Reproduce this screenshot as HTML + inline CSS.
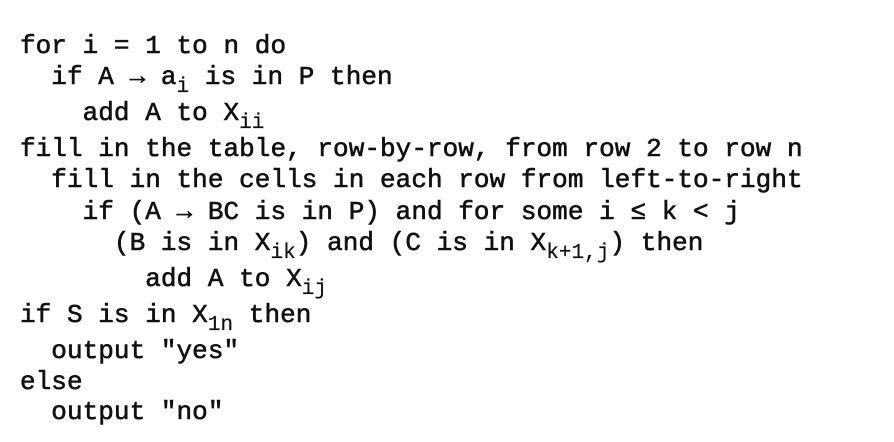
<!DOCTYPE html>
<html><head><meta charset="utf-8"><style>
html,body{margin:0;padding:0;background:#fff;width:894px;height:442px;overflow:hidden}
.l{position:absolute;left:20px;font-family:"Liberation Mono","DejaVu Sans Mono",monospace;font-size:26px;line-height:26px;font-weight:normal;-webkit-text-stroke:0.6px #111;color:#111;white-space:pre;letter-spacing:0.05px}
sub{font-size:21px;vertical-align:-8px;line-height:0;-webkit-text-stroke:0.2px #111}
</style></head><body>
<div class="l" style="top:33px">for i = 1 to n do</div>
<div class="l" style="top:64px">  if A → a<sub>i</sub> is in P then</div>
<div class="l" style="top:100px">    add A to X<sub>ii</sub></div>
<div class="l" style="top:136px">fill in the table, row-by-row, from row 2 to row n</div>
<div class="l" style="top:167px">  fill in the cells in each row from left-to-right</div>
<div class="l" style="top:199px">    if (A → BC is in P) and for some i ≤ k &lt; j</div>
<div class="l" style="top:230px">      (B is in X<sub>ik</sub>) and (C is in X<sub>k+1,j</sub>) then</div>
<div class="l" style="top:266px">        add A to X<sub>ij</sub></div>
<div class="l" style="top:302px">if S is in X<sub>1n</sub> then</div>
<div class="l" style="top:338px">  output "yes"</div>
<div class="l" style="top:369px">else</div>
<div class="l" style="top:399px">  output "no"</div>
</body></html>
